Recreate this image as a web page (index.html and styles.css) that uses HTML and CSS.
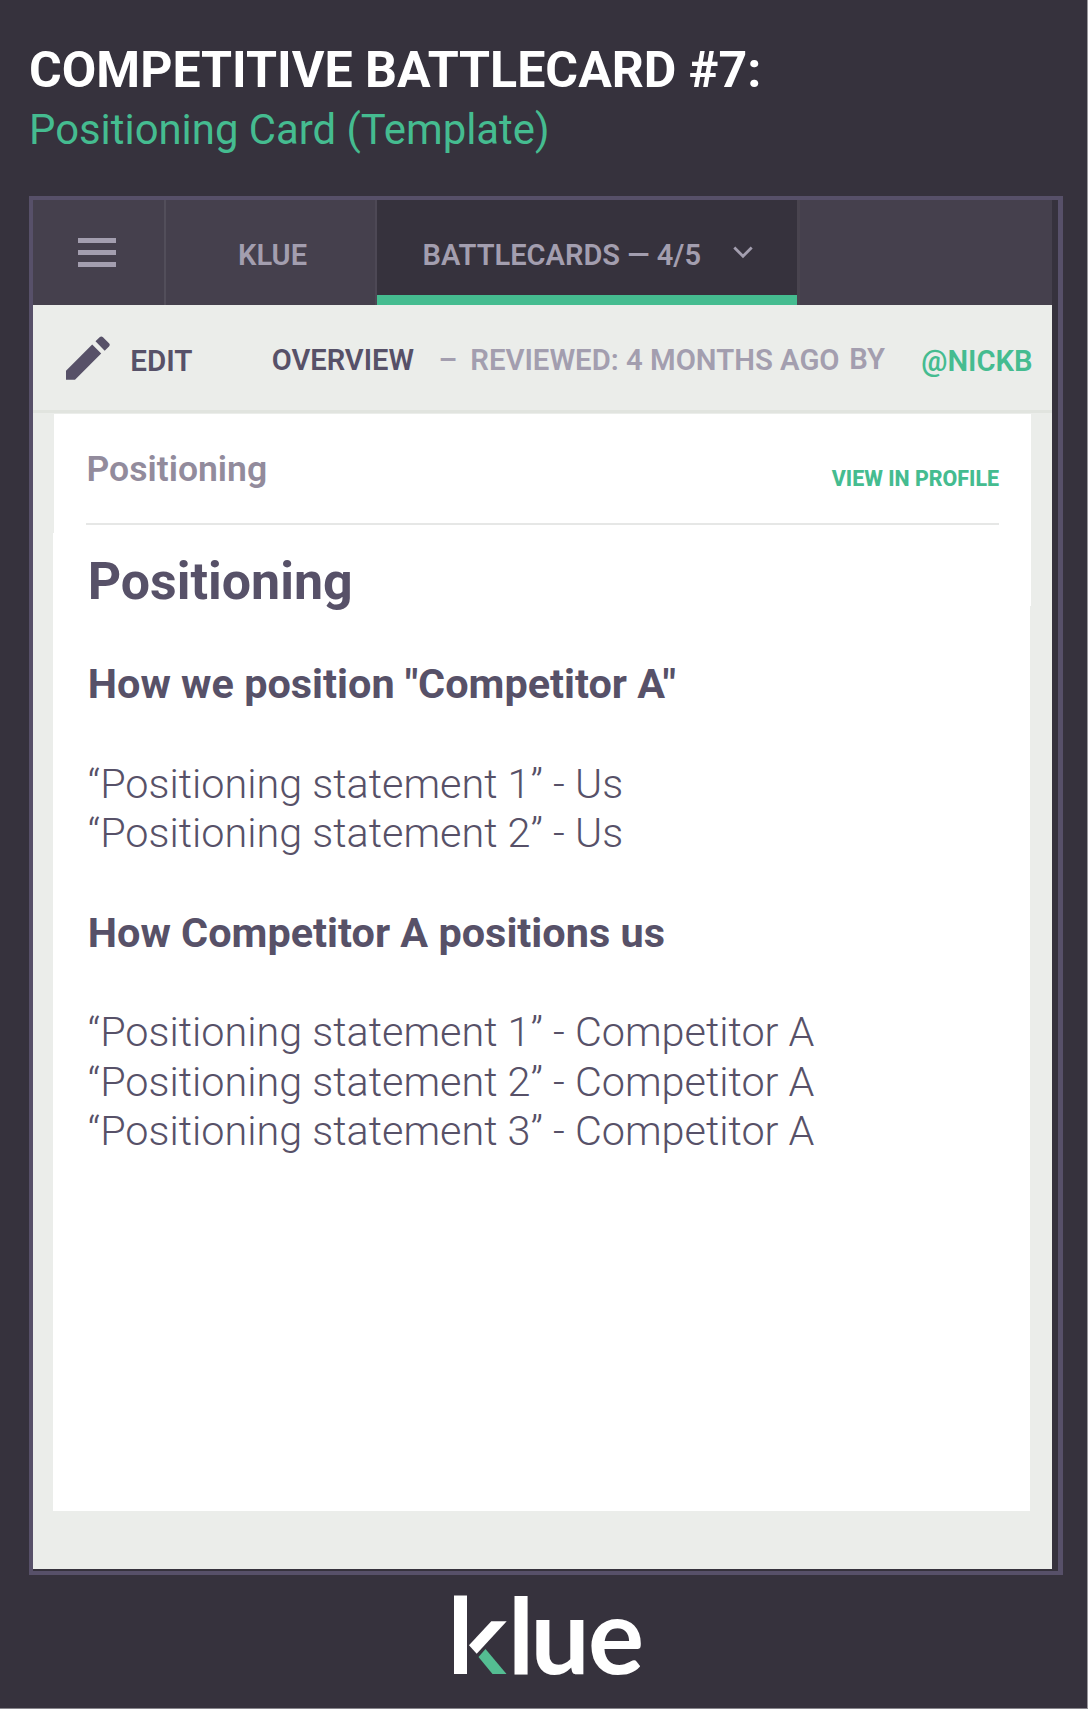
FILE: index.html
```
<!DOCTYPE html>
<html lang="en">
<head>
<meta charset="utf-8">
<title>Competitive Battlecard #7</title>
<link rel="stylesheet" href="styles.css">
</head>
<body>
<div class="page">
  <header class="heading">
    <h1 class="heading-title">COMPETITIVE BATTLECARD #7:</h1>
    <p class="heading-sub">Positioning Card (Template)</p>
  </header>

  <main class="frame">
    <nav class="tabs">
      <div class="tab tab-menu">
        <svg width="38" height="29" viewBox="0 0 38 29" fill="#a39eaf"><path d="M0 0h38v5H0zM0 12h38v5H0zM0 24h38v5H0z"/></svg>
      </div>
      <div class="tab tab-klue">KLUE</div>
      <div class="tab tab-active">
        <span>BATTLECARDS — 4/5</span>
        <svg class="chevron" width="20" height="13" viewBox="0 0 20 13" fill="none" stroke="#a39eaf" stroke-width="2.8"><path d="M1.3 1.5 10 10.2l8.7-8.7"/></svg>
      </div>
      <div class="tab tab-rest"></div>
    </nav>

    <div class="toolbar">
      <svg class="pencil" width="44" height="44" viewBox="0 0 44 44" fill="#575168"><path d="M0 34.8 26.2 8.6l9 9L9 43.8H0zM29.5 5.3 33.6 1.200q1.700-1.500 3.400 0L43 7.200q1.500 1.600 0 3.400L38.700 14.700z"/></svg>
      <span class="edit">EDIT</span>
      <span class="overview">OVERVIEW</span>
      <span class="muted">–</span>
      <span class="muted">REVIEWED: 4 MONTHS AGO</span>
      <span class="muted by">BY</span>
      <span class="user">@NICKB</span>
    </div>

    <article class="card">
      <header class="card-head">
        <div class="card-bar">
          <span class="card-label">Positioning</span>
          <span class="card-link">VIEW IN PROFILE</span>
        </div>
      </header>
      <div class="card-title"><h2>Positioning</h2></div>
      <div class="card-body">
        <h3>How we position "Competitor A"</h3>
        <p>“Positioning statement 1” - Us</p>
        <p>“Positioning statement 2” - Us</p>
        <h3>How Competitor A positions us</h3>
        <p>“Positioning statement 1” - Competitor A</p>
        <p>“Positioning statement 2” - Competitor A</p>
        <p>“Positioning statement 3” - Competitor A</p>
      </div>
    </article>
  </main>

  <footer class="footer">
    <svg width="200" height="134" viewBox="450 1566 200 134">
      <rect x="454" y="1595.500" width="13" height="78.500" fill="#fff"/>
      <path d="M491.300 1621.300h15.400l-30 32.400-7.700-8.400z" fill="#fff"/>
      <path d="M485.500 1649l21 25h-14l-14-17z" fill="#54bd92"/>
      <text class="wordmark" y="1673.500" x="508 530.500 588">lue</text>
    </svg>
  </footer>
</div>
</body>
</html>
```
FILE: styles.css
```
* { box-sizing: border-box; margin: 0; padding: 0; }

body {
  width: 1088px;
  height: 1709px;
  overflow: hidden;
  font-family: Roboto, "Liberation Sans", sans-serif;
}

svg { display: block; }

.page {
  height: 1709px;
  background: #36323d;
  border-right: 1px solid #9b999e;
  border-bottom: 1px solid #87858b;
}

.heading { height: 196px; padding: 40px 0 0 29px; line-height: 60px; }
.heading-title { font-size: 50.08px; font-weight: 700; color: #fff; }
.heading-sub { font-size: 41.85px; color: #45bc90; }

.frame {
  width: 1034px;
  height: 1379px;
  margin-left: 29px;
  padding-right: 6px;
  border: 4px solid #575069;
  border-right-width: 5px;
}

.tabs {
  display: flex;
  height: 105px;
  color: #a39eaf;
  font-size: 29.05px;
  font-weight: 600;
}
.tab {
  display: flex;
  align-items: center;
  background: #45404d;
  border-right: 2px solid #524e5a;
}
.tab-menu { width: 133px; padding-left: 45px; }
.tab-klue { width: 211px; padding: 4px 0 0 72px; border-color: #4d4855; }
.tab-active {
  width: 420px;
  padding: 14px 0 0 45.5px;
  background: #36323d;
  border-right: 0;
  border-bottom: 10px solid #45bc90;
}
.chevron { margin: -4px 0 0 32px; }
.tab-rest { flex: 1; border-right: 0; border-left: 3px solid #49444f; }

.toolbar {
  display: grid;
  grid-template-columns: 64.300px 141.400px 166.800px 31.800px 379px 72px auto;
  align-items: center;
  height: 108px;
  padding: 2px 0 0 33px;
  background: #ebedea;
  border-bottom: 3px solid #e1e4df;
  font-size: 29.2px;
  font-weight: 600;
  color: #575168;
  white-space: nowrap;
}
.toolbar .pencil { margin-bottom: 2px; }
.toolbar .edit { padding-top: 5px; font-size: 29.6px; }
.toolbar .overview { padding-top: 3px; font-size: 29.05px; }
.toolbar .muted { padding-top: 3px; color: #a39eaf; font-size: 29.3px; }
.toolbar .by { padding-top: 1px; }
.toolbar .user { padding-top: 5px; color: #45bc90; }

.card {
  height: 1156px;
  padding: 1px 22px 58px 20px;
  background: #ebedea;
}
.card-head { height: 119px; margin: 0 -1px 0 1px; padding: 0 32px; background: #fff; }
.card-bar {
  display: flex;
  justify-content: space-between;
  align-items: flex-start;
  height: 111px;
  border-bottom: 2px solid #e6e7e6;
}
.card-label { padding: 34px 0 0 0.5px; font-size: 35.55px; font-weight: 600; color: #928b9c; }
.card-link { padding-top: 52px; font-size: 21.4px; font-weight: 800; color: #45bc90; }
.card-title { height: 73px; margin-right: -1px; padding: 18px 0 0 34.7px; background: #fff; }
.card-title h2 { font-size: 51.9px; line-height: 62px; color: #575168; }
.card-body {
  height: 905px;
  padding: 54.2px 0 0 34.8px;
  background: #fff;
  color: #575168;
  font-size: 41.35px;
  line-height: 49.7px;
}
.card-body h3 { font-size: 41.42px; font-weight: 700; margin-bottom: 49.7px; }
.card-body p { font-weight: 300; }
.card-body p + h3 { margin-top: 49.7px; }

.footer { margin-top: -9px; padding-left: 450px; }
.wordmark { font: 700 105px Lato, sans-serif; fill: #fff; }
```
